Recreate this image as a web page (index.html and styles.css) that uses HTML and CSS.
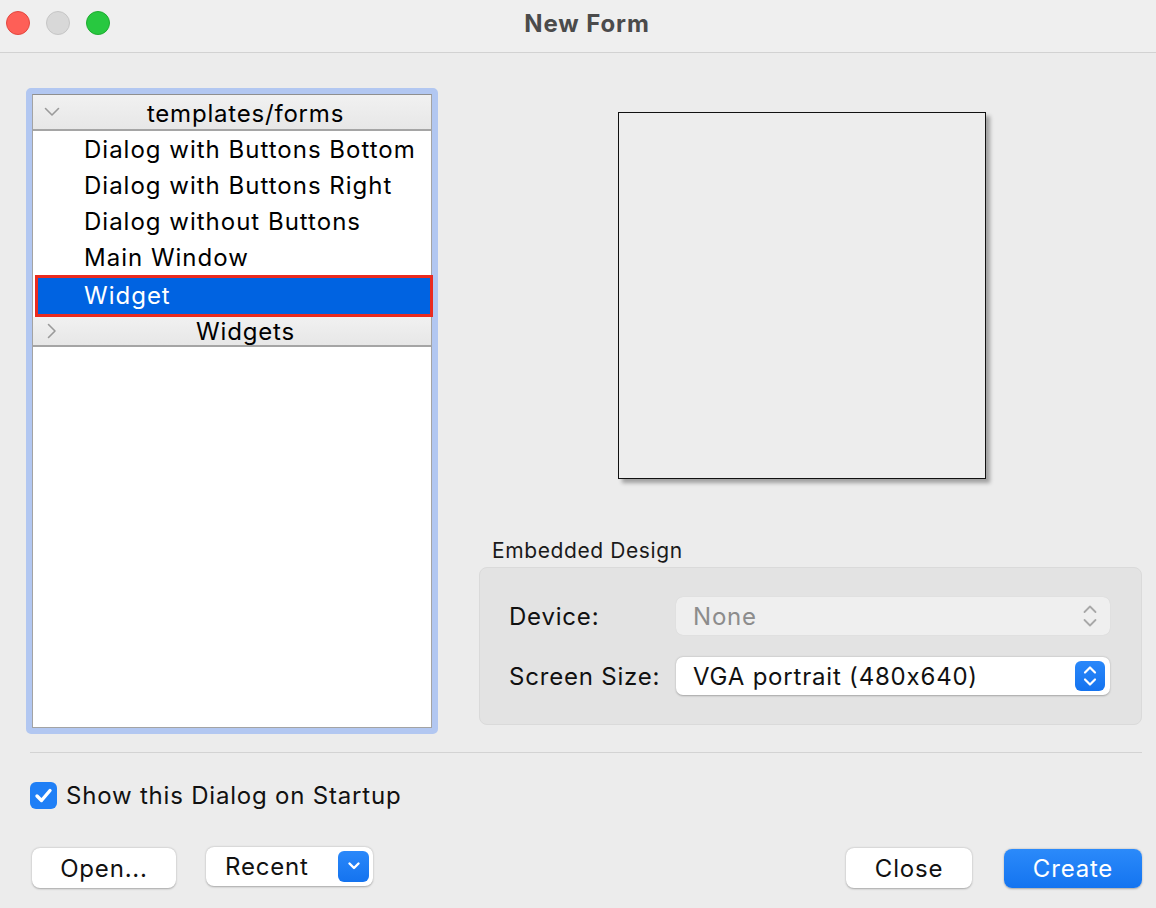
FILE: index.html
```html
<!DOCTYPE html>
<html>
<head>
<meta charset="utf-8">
<title>New Form</title>
<link rel="stylesheet" href="styles.css">
</head>
<body>
<div class="window">
  <header class="titlebar">
    <div class="lights">
      <span class="light red"></span>
      <span class="light gray"></span>
      <span class="light green"></span>
    </div>
    <div class="title">New Form</div>
    <div></div>
  </header>

  <main class="content">
    <div class="top">
      <div class="ring">
        <div class="list">
          <div class="group-header">
            <span class="chev-box"><svg class="chev-down" width="16" height="10" viewBox="0 0 16 10"><polyline points="1.5,1.5 8,8 14.5,1.5" fill="none" stroke="#9a9a9a" stroke-width="1.6" stroke-linecap="round" stroke-linejoin="round"/></svg></span>
            <span class="gh-text">templates/forms</span>
          </div>
          <div class="item">Dialog with Buttons Bottom</div>
          <div class="item">Dialog with Buttons Right</div>
          <div class="item">Dialog without Buttons</div>
          <div class="item">Main Window</div>
          <div class="item selected">Widget</div>
          <div class="group-header small">
            <span class="chev-box"><svg class="chev-right" width="10" height="16" viewBox="0 0 10 16"><polyline points="1.5,1.5 8,8 1.5,14.5" fill="none" stroke="#9a9a9a" stroke-width="1.6" stroke-linecap="round" stroke-linejoin="round"/></svg></span>
            <span class="gh-text">Widgets</span>
          </div>
        </div>
      </div>

      <div class="right">
        <div class="preview"></div>
        <div class="group-label">Embedded Design</div>
        <div class="groupbox">
          <div class="label">Device:</div>
          <div class="combo disabled">
            <span class="combo-text">None</span>
            <svg class="updown" width="16" height="26" viewBox="0 0 16 26"><polyline points="2.5,9 8,3.5 13.5,9" fill="none" stroke="#a8a8a8" stroke-width="1.8" stroke-linecap="round" stroke-linejoin="round"/><polyline points="2.5,17 8,22.5 13.5,17" fill="none" stroke="#a8a8a8" stroke-width="1.8" stroke-linecap="round" stroke-linejoin="round"/></svg>
          </div>
          <div class="label">Screen Size:</div>
          <div class="combo">
            <span class="combo-text">VGA portrait (480x640)</span>
            <span class="stepper"><svg width="16" height="26" viewBox="0 0 16 26"><polyline points="3,9.5 8,4.5 13,9.5" fill="none" stroke="#ffffff" stroke-width="2.2" stroke-linecap="round" stroke-linejoin="round"/><polyline points="3,16.5 8,21.5 13,16.5" fill="none" stroke="#ffffff" stroke-width="2.2" stroke-linecap="round" stroke-linejoin="round"/></svg></span>
          </div>
        </div>
      </div>
    </div>

    <div class="separator"></div>

    <div class="check-row">
      <span class="checkbox"><svg width="27" height="27" viewBox="0 0 27 27"><polyline points="7,14 11.5,18.5 20,8.5" fill="none" stroke="#ffffff" stroke-width="3.4" stroke-linecap="round" stroke-linejoin="round"/></svg></span>
      <span class="check-text">Show this Dialog on Startup</span>
    </div>

    <div class="buttons">
      <div class="btn open">Open...</div>
      <div class="btn recent"><span class="recent-text">Recent</span><span class="drop"><svg width="16" height="12" viewBox="0 0 16 12"><polyline points="3.5,3.5 8,8 12.5,3.5" fill="none" stroke="#ffffff" stroke-width="2.4" stroke-linecap="round" stroke-linejoin="round"/></svg></span></div>
      <div class="spacer"></div>
      <div class="btn close">Close</div>
      <div class="btn create">Create</div>
    </div>
  </main>
</div>
</body>
</html>
```

FILE: styles.css
```css
* { box-sizing: border-box; }

html, body {
  margin: 0;
  padding: 0;
}

body {
  width: 1156px;
  height: 908px;
  overflow: hidden;
  background: #ececec;
  font-family: Inter, "Liberation Sans", Arial, sans-serif;
  font-size: 24px;
  letter-spacing: 0.8px;
  font-feature-settings: "calt" 0;
  color: #111;
}

.window {
  width: 1156px;
  height: 908px;
  background: #ececec;
}

/* Title bar */
.titlebar {
  height: 53px;
  background: #efefef;
  border-bottom: 1px solid #d2d2d2;
  display: grid;
  grid-template-columns: 1fr auto 1fr;
  align-items: center;
  padding-bottom: 6px;
}

.lights {
  display: flex;
  gap: 16px;
  padding-left: 6px;
}

.light {
  width: 24px;
  height: 24px;
  border-radius: 50%;
  display: block;
}

.light.red { background: #fe5f57; border: 1px solid #e3473f; }
.light.gray { background: #d8d8d8; border: 1px solid #c6c6c6; }
.light.green { background: #28c840; border: 1px solid #1eac30; }

.title {
  font-weight: 700;
  font-size: 24px;
  letter-spacing: 0.9px;
  color: #4b4b4b;
  margin-left: 18px;
}

/* Content */
.content {
  padding: 35px 14px 0 26px;
}

.top {
  display: flex;
  height: 646px;
}

.ring {
  width: 412px;
  height: 646px;
  border: 6px solid #b2c7f1;
  border-radius: 5px;
  flex: none;
}

.list {
  height: 100%;
  background: #ffffff;
  border: 1px solid #a3a3a3;
  border-top-color: #8f8f8f;
}

.group-header {
  height: 36px;
  display: flex;
  align-items: center;
  background: linear-gradient(#f1f1f1, #e7e7e7);
  border-bottom: 2px solid #a5a5a5;
}

.group-header.small {
  height: 30px;
}

.group-header.small .gh-text {
  padding-top: 1px;
}

.chev-box {
  width: 27px;
  flex: none;
  display: flex;
  align-items: center;
}

.chev-down { margin-left: 11px; }
.chev-right { margin-left: 14px; }

.gh-text {
  flex: 1;
  text-align: center;
  color: #000;
  padding-top: 3px;
}

.item {
  height: 36px;
  line-height: 36px;
  padding-top: 1px;
  padding-left: 51px;
  color: #000;
  letter-spacing: 1px;
  white-space: nowrap;
}

.item.selected {
  height: 42px;
  line-height: 36px;
  padding-top: 0;
  margin: 0 -2px 0 2px;
  border: 3px solid #ea2b1f;
  background: #0063e1;
  color: #ffffff;
  padding-left: 46px;
}

/* Right column */
.right {
  flex: 1;
  display: flex;
  flex-direction: column;
  padding-left: 41px;
}

.preview {
  width: 368px;
  height: 367px;
  margin-top: 24px;
  margin-left: 139px;
  background: #ededed;
  border: 1px solid #111;
  box-shadow: 4px 4px 4px rgba(0, 0, 0, 0.32);
}

.group-label {
  margin-top: 60px;
  margin-left: 13px;
  height: 24px;
  line-height: 24px;
  font-size: 21px;
  letter-spacing: 0.6px;
  color: #1a1a1a;
  margin-bottom: 4px;
}

.groupbox {
  height: 158px;
  background: #e3e3e3;
  border: 1px solid #dadada;
  border-radius: 8px;
  padding: 29px 31px 0 29px;
  display: grid;
  grid-template-columns: 167px 1fr;
  grid-auto-rows: 38px;
  row-gap: 22px;
  align-items: center;
}

.label {
  color: #111;
}

.combo {
  height: 38px;
  border-radius: 7px;
  background: #ffffff;
  box-shadow: 0 0.5px 2px rgba(0, 0, 0, 0.28);
  display: flex;
  align-items: center;
  padding-left: 17px;
  padding-right: 5px;
}

.combo.disabled {
  background: #efefef;
  box-shadow: 0 0 1px rgba(0, 0, 0, 0.12);
  color: #8c8c8c;
  padding-right: 12px;
}

.combo-text {
  flex: 1;
}

.stepper {
  width: 30px;
  height: 30px;
  border-radius: 6px;
  background: linear-gradient(#2a88fa, #1473ef);
  display: flex;
  align-items: center;
  justify-content: center;
}

/* Separator, checkbox */
.separator {
  height: 1px;
  background: #d3d3d3;
  margin: 18px 0 0 4px;
}

.check-row {
  margin-top: 28px;
  margin-left: 4px;
  display: flex;
  align-items: center;
  height: 28px;
}

.checkbox {
  width: 27px;
  height: 27px;
  border-radius: 6px;
  background: #1f7ff6;
  display: block;
  flex: none;
}

.checkbox svg { display: block; }

.check-text {
  margin-left: 9px;
  color: #111;
}

/* Buttons */
.buttons {
  margin-top: 38px;
  height: 42px;
  display: flex;
  align-items: center;
}

.btn {
  height: 40px;
  border-radius: 8px;
  background: #ffffff;
  box-shadow: 0 0.5px 2px rgba(0, 0, 0, 0.3);
  display: flex;
  align-items: center;
  justify-content: center;
  color: #111;
}

.btn.open {
  width: 144px;
  margin-left: 6px;
}

.btn.recent {
  width: 167px;
  height: 39px;
  margin-left: 30px;
  margin-bottom: 4px;
  justify-content: flex-start;
  padding-left: 19px;
  padding-right: 4px;
}

.recent-text { flex: 1; }

.drop {
  width: 31px;
  height: 31px;
  border-radius: 6px;
  background: linear-gradient(#2a88fa, #1473ef);
  display: flex;
  align-items: center;
  justify-content: center;
}

.spacer { flex: 1; }

.btn.close {
  width: 126px;
}

.btn.create {
  width: 138px;
  height: 39px;
  margin-left: 32px;
  background: linear-gradient(#2b8afa, #1474f0);
  color: #ffffff;
}
```
